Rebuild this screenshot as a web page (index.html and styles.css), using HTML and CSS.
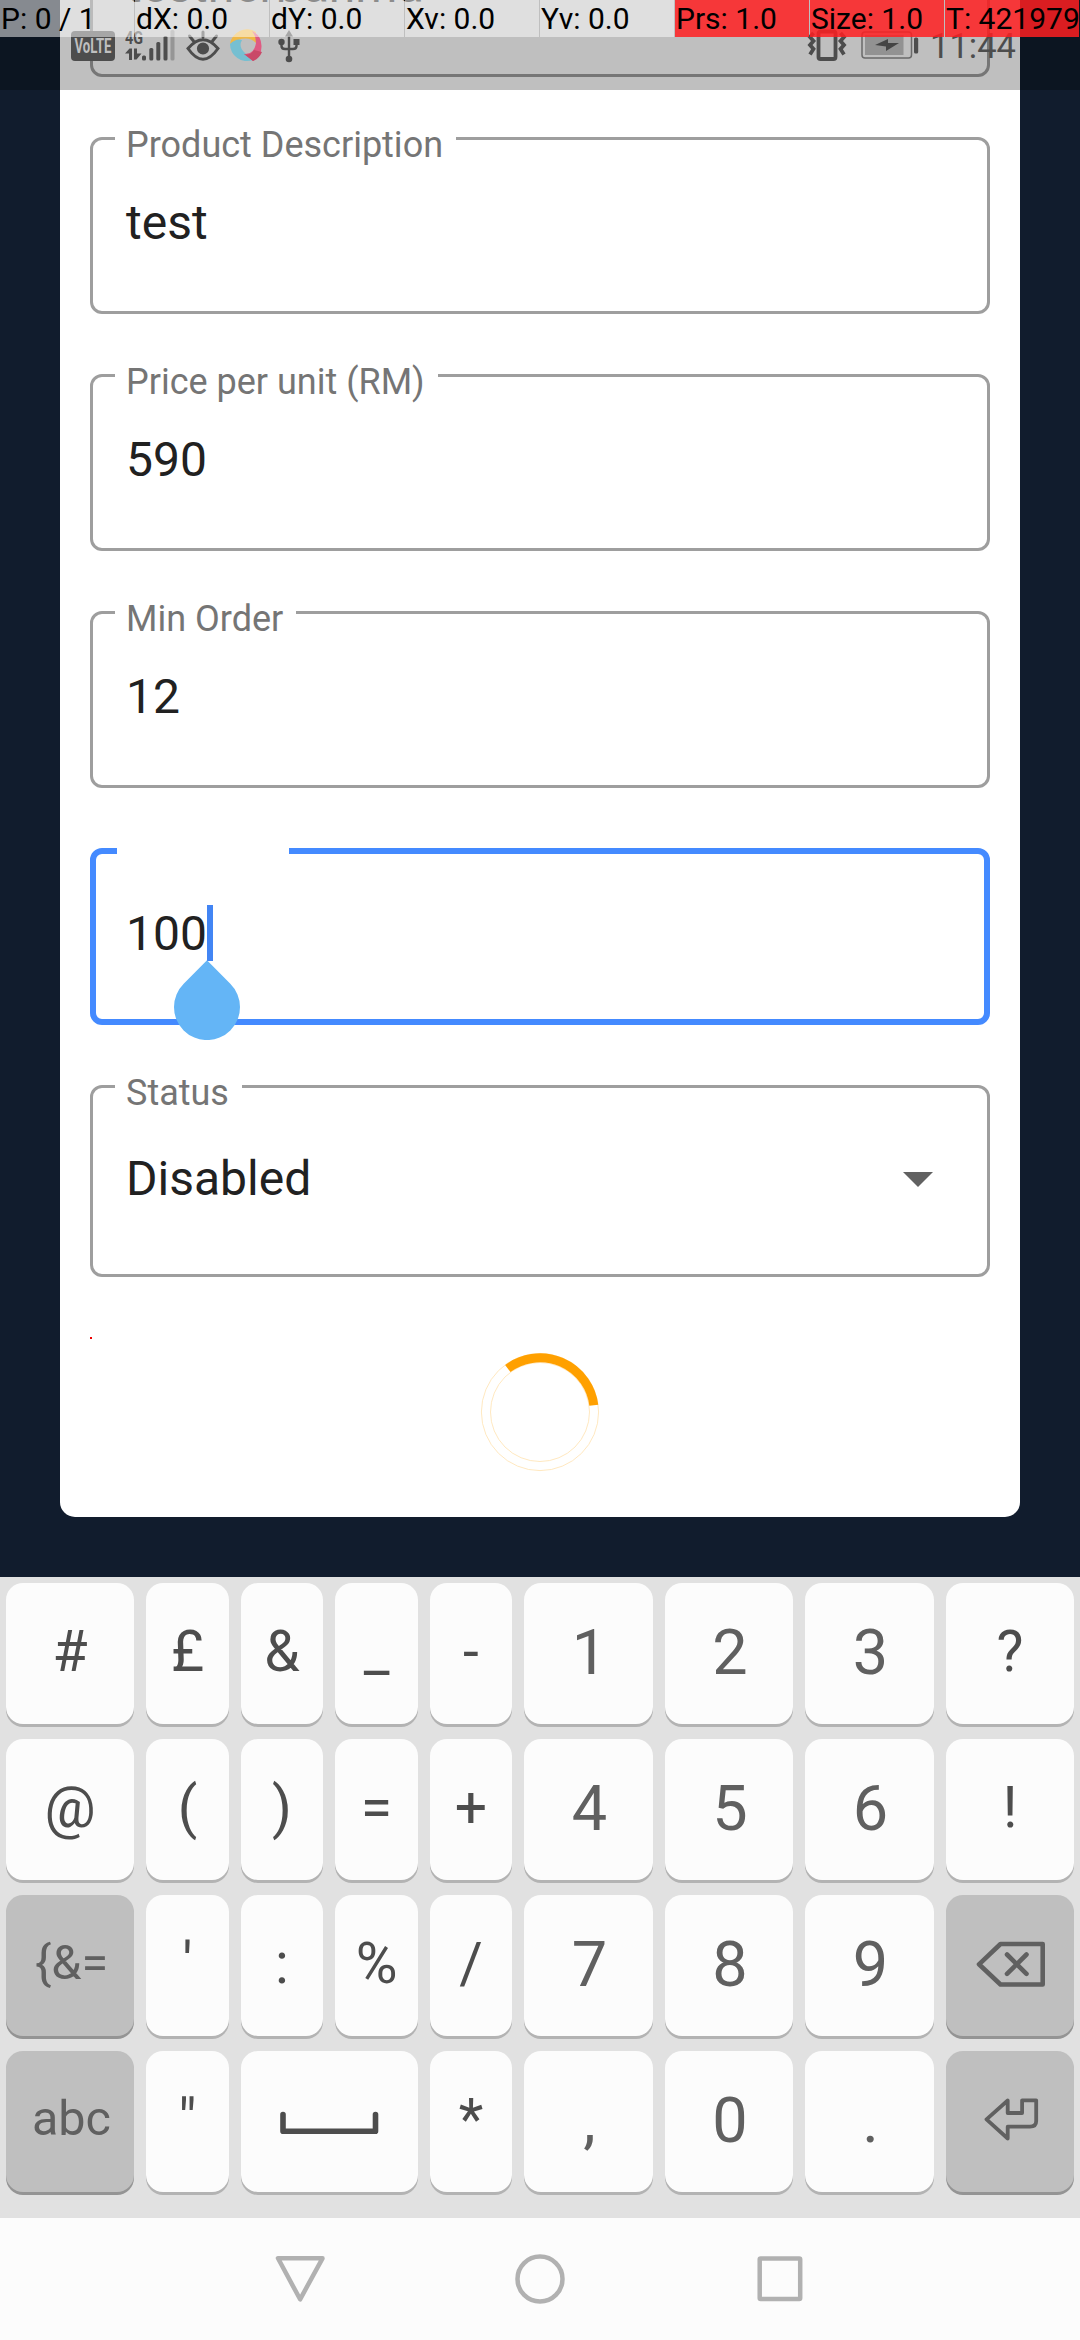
FILE: index.html
```html
<!DOCTYPE html>
<html lang="en">
<head>
<meta charset="utf-8">
<title>Edit product</title>
<link rel="stylesheet" href="styles.css">
</head>
<body>
<div class="phone">
  <main class="page">
    <form class="card">
      <div class="field"><span class="label"></span><span class="value">testherbahma</span></div>
      <div class="field"><span class="label">Product Description</span><span class="value">test</span></div>
      <div class="field"><span class="label">Price per unit (RM)</span><span class="value">590</span></div>
      <div class="field"><span class="label">Min Order</span><span class="value">12</span></div>
      <div class="field focused">
        <span class="label"></span>
        <span class="value">100<i class="caret"></i></span>
        <svg class="handle" viewBox="0 0 66 80"><path d="M33 .3 56.3 23.7A33 33 0 1 1 9.7 23.7Z" fill="#64b5f6"/></svg>
      </div>
      <div class="field select">
        <span class="label">Status</span>
        <span class="value">Disabled<svg class="arrow" viewBox="0 0 30 15"><path d="M0 0H30L15 15Z" fill="#616161"/></svg></span>
      </div>
      <div class="error"></div>
      <svg class="spinner" viewBox="0 0 120 120" fill="none">
        <circle cx="60" cy="60" r="58.6" stroke="#ffe2b0" stroke-width=".8"/>
        <circle cx="60" cy="60" r="49.5" stroke="#ffe2b0" stroke-width=".8"/>
        <path d="M27.8 16.5A54.2 54.2 0 0 1 113.8 53.2" stroke="#ffa000" stroke-width="9"/>
      </svg>
    </form>
  </main>

  <section class="keyboard">
    <span class="key">#</span><span class="key">£</span><span class="key">&amp;</span><span class="key">_</span><span class="key">-</span><span class="key num">1</span><span class="key num">2</span><span class="key num">3</span><span class="key">?</span>
    <span class="key">@</span><span class="key">(</span><span class="key">)</span><span class="key">=</span><span class="key">+</span><span class="key num">4</span><span class="key num">5</span><span class="key num">6</span><span class="key">!</span>
    <span class="key fn">{&amp;=</span><span class="key">'</span><span class="key">:</span><span class="key">%</span><span class="key">/</span><span class="key num">7</span><span class="key num">8</span><span class="key num">9</span>
    <span class="key fn"><svg class="glyph" viewBox="0 0 128 141"><path d="M33 69.3 54.5 49H96.7V89.5H54.5ZM61 59.5 80.5 78.8M80.5 59.5 61 78.8"/></svg></span>
    <span class="key fn">abc</span><span class="key">"</span>
    <span class="key space"><svg class="glyph" viewBox="0 0 177 141"><path d="M42 63.5V80.3H134.500V63.5"/></svg></span>
    <span class="key">*</span><span class="key num">,</span><span class="key num">0</span><span class="key num">.</span>
    <span class="key fn"><svg class="glyph enter" viewBox="0 0 128 141"><path d="M40.500 68.300 61.700 49.500V62H76.100V49.300H90.200V70Q90.200 75.700 84 75.700H61.700V87.500Z"/></svg></span>
  </section>

  <nav class="navbar">
    <svg viewBox="0 0 60 60"><path d="M8 9.300H52.500L30.100 50.300Z"/></svg>
    <svg viewBox="0 0 60 60"><circle cx="30" cy="30" r="22.500"/></svg>
    <svg viewBox="0 0 60 60"><rect x="9.700" y="9.400" width="40.500" height="40.500" rx="1"/></svg>
  </nav>

  <header class="statusbar">
    <svg class="volte" viewBox="0 0 44 30"><rect width="44" height="30" rx="4" fill="#4d4d4d"/><text x="3.500" y="22" textLength="37" lengthAdjust="spacingAndGlyphs">VoLTE</text></svg>
    <svg class="signal" viewBox="0 0 50 32">
      <text x="0" y="13.500" textLength="18" lengthAdjust="spacingAndGlyphs">4G</text>
      <path d="M0 23.500 4.500 18.500H7V30H4V23.500ZM9 18.500H12V23.500H16.500L11.500 29.500H9Z" fill="#4d4d4d"/>
      <g fill="#4d4d4d"><rect x="17" y="25.500" width="4" height="5" rx="1.500"/><rect x="24.300" y="18" width="4" height="12.500" rx="1.500"/><rect x="31.300" y="12" width="4" height="18.500" rx="1.500"/><rect x="38.500" y="6" width="4" height="24.500" rx="1.500"/></g>
      <rect x="45.500" y="0" width="4" height="30.500" rx="1.500" fill="#969696"/>
    </svg>
    <svg class="eye" viewBox="0 0 34 32" fill="none" stroke="#4d4d4d" stroke-width="3" stroke-linecap="round"><path d="M2 18.500Q17 1 32 18.500Q17 40 2 18.500ZM3.500 6 7.500 11M17 2V7M30.500 6 26.500 11"/><circle cx="17" cy="18.500" r="4.600" fill="#4d4d4d"/></svg>
    <svg class="swirl" viewBox="0 0 36 36">
      <path d="M1 16A17 17 0 0 1 27 4L27 15Q20 8 9 12Z" fill="#efb847"/>
      <path d="M1 16Q7 10 13 12Q9 19 16 25L24 32A17 17 0 0 1 1 16Z" fill="#76bfd1"/>
      <path d="M23 3A17 17 0 0 1 24 33L15 26Q25 27 27 15Q27 8 23 3Z" fill="#df5b82"/>
      <path d="M15 26Q21 28 25 22L33 24Q30 31 24 33Z" fill="#c94968"/>
    </svg>
    <svg class="usb" viewBox="0 0 22 33" fill="#4d4d4d"><path d="M11 0 15 6.500H7Z"/><circle cx="11" cy="29" r="3.300"/><circle cx="3.500" cy="12" r="3.200"/><rect x="15.500" y="9" width="6" height="6"/><path d="M11 4V29M3.500 12V16Q3.500 19 7 19H15Q18.500 19 18.500 16V13" fill="none" stroke="#4d4d4d" stroke-width="2.400"/></svg>
    <svg class="vibrate" viewBox="0 0 40 32" fill="none" stroke="#4d4d4d" stroke-width="3.800"><rect x="11.500" y="2.500" width="17" height="27.500" rx="2"/><path d="M6.500 4 3 8 6.500 12 3 16 6.500 20 3 25.500M33.500 4 37 8 33.500 12 37 16 33.500 20 37 25.500"/></svg>
    <svg class="battery" viewBox="0 0 59 30"><rect x="1" y="2" width="49.500" height="26" rx="3" fill="none" stroke="#6a6a6a" stroke-width="1.500"/><rect x="4" y="5" width="38.500" height="20" fill="#929292"/><path d="M14 15 27 9V13H38L25 21V16.500Z" fill="#444"/><rect x="53" y="7.500" width="4.200" height="16" rx="1.500" fill="#4d4d4d"/></svg>
    <span class="clock">11:44</span>
  </header>

  <div class="pointer">
    <span>P: 0 / 1</span><span>dX: 0.0</span><span>dY: 0.0</span><span>Xv: 0.0</span><span>Yv: 0.0</span><span class="hot">Prs: 1.0</span><span class="hot">Size: 1.0</span><span class="hot">T: 421979</span>
  </div>
</div>
</body>
</html>
```
FILE: styles.css
```css
* { box-sizing: border-box; }
body { margin: 0; font-family: Roboto, "Liberation Sans", sans-serif; }
svg { display: block; flex: none; }

.phone {
  position: relative;
  display: grid;
  grid-template-rows: 1577px 641px 122px;
  width: 1080px;
  height: 2340px;
  overflow: hidden;
}

/* form */
.page { background: #111c2d; padding: 0 60px; overflow: hidden; }
.card {
  display: flex;
  flex-direction: column;
  gap: 60px;
  height: 1677px;
  margin-top: -160px;
  padding: 60px 30px 0;
  background: #fff;
  border-radius: 15px;
}
.field {
  position: relative;
  display: flex;
  flex-direction: column;
  align-items: flex-start;
  flex: none;
  height: 177px;
  border: 3px solid #9e9e9e;
  border-radius: 12px;
}
.label {
  height: 42px;
  margin: -16px 0 29px 22px;
  padding: 0 13px 0 11px;
  background: #fff;
  color: #757575;
  font-size: 36px;
  line-height: 42px;
  white-space: nowrap;
}
.value {
  display: flex;
  align-items: center;
  width: 100%;
  padding-left: 33px;
  color: #212121;
  font-size: 48px;
  line-height: 56px;
}
.focused { border: 6px solid #448aff; }
.focused .label { width: 172px; margin: -19px 0 29px 21px; }
.focused .value { padding-left: 30px; }
.caret { width: 6px; height: 56px; margin-top: -2px; background: #4285f4; }
.handle { position: absolute; left: 78px; top: 106px; width: 66px; height: 80px; }
.select { height: 192px; }
.select .label { margin-bottom: 37px; }
.arrow { width: 30px; height: 15px; margin-left: auto; margin-right: 54px; }
.error { flex: none; width: 2px; height: 2px; background: #e00; }
.spinner { width: 120px; height: 120px; margin: -47px auto 0; }

/* keyboard */
.keyboard {
  display: grid;
  grid-template-columns: 128px 83px 82px 83px 82px 129px 128px 129px 128px;
  grid-auto-rows: 141px;
  gap: 15px 12px;
  padding: 6px;
  background: #e1e1e1;
}
.key {
  border-radius: 17px;
  background: #fcfcfc;
  box-shadow: 0 3px 0 #b3b3b3;
  color: #4d4d4d;
  font-size: 57px;
  line-height: 137px;
  text-align: center;
}
.num { color: #606060; font-size: 63px; line-height: 139px; padding-left: 2px; }
.fn { background: #bfbfbf; box-shadow: 0 3px 0 #949494; color: #606060; font-size: 48.500px; line-height: 135px; padding-left: 3px; }
.fn:has(svg) { padding: 0; }
.space { grid-column: span 2; }
.glyph { width: 100%; height: 141px; fill: none; stroke: #606060; stroke-width: 4.6px; stroke-linecap: round; stroke-linejoin: round; }
.space .glyph { stroke: #4d4d4d; stroke-width: 5.6px; }
.enter { stroke-width: 3.8px; }

/* navigation */
.navbar { display: flex; justify-content: center; align-items: center; gap: 180px; background: #fcfcfc; }
.navbar svg { width: 60px; height: 60px; fill: none; stroke: #b1b1b1; stroke-width: 4.5px; stroke-linejoin: round; }

/* system overlays */
.statusbar {
  position: absolute;
  inset: 0 0 auto;
  display: flex;
  align-items: flex-start;
  height: 90px;
  padding: 30px 66px 0 71px;
  background: rgba(0, 0, 0, .25);
}
.volte { width: 44px; height: 30px; margin: 1px 10px 0 0; }
.volte text { font: 700 20px Roboto, sans-serif; fill: #bfbfbf; }
.signal { width: 50px; height: 32px; margin-right: 11px; }
.signal text { font: 700 18px Roboto, sans-serif; fill: #4d4d4d; }
.eye { width: 34px; height: 32px; margin-right: 9px; }
.swirl { width: 36px; height: 36px; margin: -2px 13px 0 0; }
.usb { width: 22px; height: 33px; }
.vibrate { width: 40px; height: 32px; margin: -1px 14px 0 auto; }
.battery { width: 59px; height: 30px; margin-right: 10px; }
.clock { width: 84px; color: #4d4d4d; font-size: 34.500px; line-height: 40px; margin-top: -4px; white-space: nowrap; }

.pointer {
  position: absolute;
  inset: 0 0 auto;
  display: grid;
  grid-template-columns: repeat(8, 134px);
  grid-template-rows: 37px;
  gap: 1px;
}
.pointer span {
  padding-left: 1px;
  background: rgba(255, 255, 255, .5);
  color: #000;
  font-size: 30px;
  line-height: 38px;
  white-space: nowrap;
}
.pointer .hot { background: rgba(255, 31, 33, .85); }
```
